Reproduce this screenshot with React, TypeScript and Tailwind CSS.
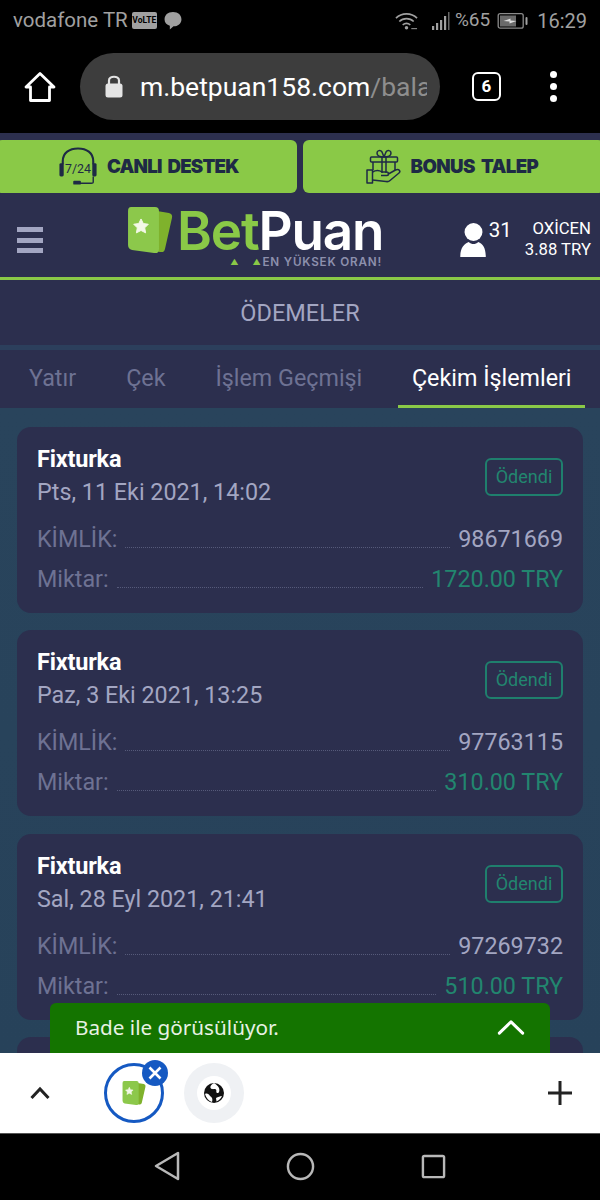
import React from "react";

const records = [
  { date: "Pts, 11 Eki 2021, 14:02", id: "98671669", amount: "1720.00 TRY" },
  { date: "Paz, 3 Eki 2021, 13:25", id: "97763115", amount: "310.00 TRY" },
  { date: "Sal, 28 Eyl 2021, 21:41", id: "97269732", amount: "510.00 TRY" },
];

function LogoCard({ size }: { size: number }) {
  return (
    <svg width={size} height={size * 1.02} viewBox="0 0 46 47" className="shrink-0">
      <path d="M24 3 L42 6 Q46 7 45 11 L38 42 Q37 46 33 45 L22 43 Z" fill="#7fb22c" />
      <path d="M4 0 H28 Q32 0 32 4 L32 42 Q32 47 27 46 L5 43 Q1 42 1 38 V4 Q1 0 4 0 Z" fill="#8cc84b" />
      <path d="M14 12 l2.3 4.6 5 .7 -3.6 3.6 .9 5 -4.6 -2.4 -4.6 2.4 .9 -5 -3.6 -3.6 5 -.7 Z" fill="#f3f8e8" strokeLinejoin="round" stroke="#f3f8e8" strokeWidth="1" />
    </svg>
  );
}

function Headset() {
  return (
    <svg width="40" height="40" viewBox="0 0 42 42" fill="none" stroke="#1e2a45" className="shrink-0">
      <path d="M5 18 V15 C5 6 12 1.500 21 1.500 C30 1.500 37 6 37 15 V18" strokeWidth="2.200" />
      <rect x="1.500" y="17" width="4.500" height="14" rx="1.500" fill="#1e2a45" stroke="none" />
      <rect x="36" y="17" width="4.500" height="14" rx="1.500" fill="#1e2a45" stroke="none" />
      <path d="M37 31 V37 Q37 38 35 38 H22" strokeWidth="1.500" />
      <rect x="16" y="35.500" width="8" height="4" rx="1" fill="#1e2a45" stroke="none" />
      <text x="21" y="27.500" textAnchor="middle" fontSize="13" fontFamily="Roboto, sans-serif" fill="#1e2a45" stroke="none">7/24</text>
    </svg>
  );
}

function Gift() {
  return (
    <svg width="36" height="36" viewBox="0 0 36 36" fill="none" stroke="#1e2a45" strokeWidth="1.500" strokeLinejoin="round" className="shrink-0">
      <path d="M18 8 C14 8 11 6.500 11 4 C11 1.500 14.500 .5 16 3 Z M18 8 C22 8 25 6.500 25 4 C25 1.500 21.500 .5 20 3 Z" />
      <rect x="4.500" y="8" width="27" height="5" rx="1" />
      <path d="M7 13 V21 M29 13 V21" />
      <path d="M16 8 V24 M20 8 V24" />
      <path d="M1 21 H6.500 V34 H1 Z" />
      <path d="M6.500 23 C10 21 13 21 16 23 H21 C23 23 23 26.500 21 26.500 H15 M21.500 25.500 L29.500 21 C33 19.500 35 22 33 24 L24 31.500 Q22.500 33 20 32.500 L6.500 31" />
    </svg>
  );
}

function Card({ date, id, amount }: { date: string; id: string; amount: string }) {
  return (
    <div className="bg-[#2c2f4e] rounded-[14px] h-[186px] pl-[20px] pr-[20px] pt-[17px] shrink-0">
      <div className="flex justify-between items-start">
        <div>
          <div className="text-white font-bold text-[23.500px] leading-[30px] tracking-[-0.2px]">Fixturka</div>
          <div className="text-[#a3a6c2] text-[23.300px] leading-[34px] mt-[1px]">{date}</div>
        </div>
        <div className="mt-[14px] w-[78px] h-[38px] border-2 border-[#1f7f6d] rounded-[6px] text-[#22866f] text-[18px] flex items-center justify-center pb-[1px]">
          Ödendi
        </div>
      </div>
      <div className="flex items-end mt-[10px] h-[40px]">
        <span className="text-[#6e7293] text-[23.300px] leading-[40px]">KİMLİK:</span>
        <span className="flex-1 border-b border-dotted border-[#565a7a] mx-[8px] mb-[11px]" />
        <span className="text-[#a3a6c2] text-[23.300px] leading-[40px]">{id}</span>
      </div>
      <div className="flex items-end h-[40px]">
        <span className="text-[#6e7293] text-[23.300px] leading-[40px]">Miktar:</span>
        <span className="flex-1 border-b border-dotted border-[#565a7a] mx-[8px] mb-[11px]" />
        <span className="text-[#22866f] text-[23.300px] leading-[40px]">{amount}</span>
      </div>
    </div>
  );
}

export default function App() {
  return (
    <div className="relative w-[600px] h-[1200px] overflow-hidden flex flex-col bg-black font-['Roboto',sans-serif]">
      {/* status bar */}
      <div className="h-[42px] shrink-0 flex items-center justify-between pl-[13px] pr-[13px] text-[#a0a0a0] text-[20px] pb-[1px]">
        <div className="flex items-center">
          <span className="text-[20.500px]">vodafone TR</span>
          <span className="ml-[4px] w-[25px] h-[17px] rounded-[2px] bg-[#a0a0a0] text-black text-[8.500px] font-bold flex items-center justify-center leading-none">VoLTE</span>
          <svg width="20" height="19" viewBox="0 0 18 18" className="ml-[6px]">
            <path d="M9 1 C14 1 17 4 17 8 C17 12 13.500 14.500 9.500 14.500 L6 17.500 V14 C3 13 1 11 1 8 C1 4 4 1 9 1 Z" fill="#a0a0a0" />
          </svg>
        </div>
        <div className="flex items-center">
          <svg width="23" height="20" viewBox="0 0 24 20" fill="none" stroke="#a0a0a0" strokeWidth="1.700" className="mr-[13px]">
            <path d="M1 7 C7 1 17 1 23 7 M4.500 10.500 C8.500 6.500 15.500 6.500 19.500 10.500 M8 14 C10.500 12 13.500 12 16 14" />
            <circle cx="12" cy="17" r="1.800" fill="#a0a0a0" stroke="none" />
            <path d="M17 18 h6" strokeWidth="1" />
          </svg>
          <svg width="20" height="20" viewBox="0 0 20 20" className="mr-[4px]">
            <rect x="1" y="15" width="2.200" height="4" fill="#a0a0a0" />
            <rect x="5" y="12" width="2.200" height="7" fill="#a0a0a0" />
            <rect x="9" y="9" width="2.200" height="10" fill="#a0a0a0" />
            <rect x="13" y="5" width="2.200" height="14" fill="#a0a0a0" />
            <rect x="17" y="1" width="1.500" height="18" fill="#666" />
          </svg>
          <span className="text-[19px]">%65</span>
          <svg width="33" height="18" viewBox="0 0 30 18" className="ml-[6px]">
            <rect x=".7" y="1.700" width="25" height="14.500" rx="2" fill="none" stroke="#8a8a8a" strokeWidth="1.300" />
            <rect x="2.500" y="3.500" width="16" height="11" fill="#6a6a6a" />
            <path d="M6 9 L13 6.500 V8.500 L19 9 L12 11.500 V9.500 Z" fill="#ddd" />
            <rect x="28" y="5" width="2" height="8" rx="1" fill="#a0a0a0" />
          </svg>
          <span className="ml-[8px]">16:29</span>
        </div>
      </div>

      {/* browser toolbar */}
      <div className="h-[91px] shrink-0 flex items-center pb-[2px]">
        <svg width="32" height="32" viewBox="0 0 32 32" fill="none" stroke="#fff" strokeWidth="2.800" strokeLinejoin="round" className="ml-[24px] shrink-0">
          <path d="M16 2.500 L30 16 H25.500 V29.500 H6.500 V16 H2 Z" />
        </svg>
        <div className="ml-[24px] w-[360px] h-[67px] rounded-full bg-[#3d3d3d] flex items-center pl-[24px] pr-[13px] overflow-hidden shrink-0">
          <svg width="20" height="25" viewBox="0 0 20 25" className="shrink-0">
            <rect x="1.500" y="9.500" width="17" height="14" rx="2.500" fill="#e4e4e4" />
            <path d="M5 10 V6.500 C5 1.500 15 1.500 15 6.500 V10" fill="none" stroke="#e4e4e4" strokeWidth="2.200" />
          </svg>
          <div className="ml-[16px] text-[26.500px] whitespace-nowrap overflow-hidden text-white">
            m.betpuan158.com<span className="text-[#8e8e8e]">/balance</span>
          </div>
        </div>
        <div className="ml-[32px] w-[29px] h-[29px] border-[2.500px] border-white rounded-[6px] text-white text-[17px] font-bold flex items-center justify-center shrink-0">6</div>
        <div className="ml-[49px] flex flex-col gap-[5px] shrink-0">
          <span className="w-[7px] h-[7px] rounded-full bg-white" />
          <span className="w-[7px] h-[7px] rounded-full bg-white" />
          <span className="w-[7px] h-[7px] rounded-full bg-white" />
        </div>
      </div>

      {/* page */}
      <div className="flex-1 min-h-0 bg-[#2c2f4e] flex flex-col overflow-hidden">
        <div className="mt-[7px] h-[53px] shrink-0 flex gap-[6px] ml-[-4px] mr-[-4px]">
          <div className="flex-1 bg-[#8ac947] rounded-[6px] flex items-center pl-[62px] gap-[9px]">
            <Headset />
            <span className="text-[#1e2a45] text-[18.700px] font-black font-['Inter',sans-serif] tracking-[-0.8px] [word-spacing:3px] pt-[1px]">CANLI DESTEK</span>
          </div>
          <div className="flex-1 bg-[#8ac947] rounded-[6px] flex items-center pl-[63px] gap-[9px]">
            <Gift />
            <span className="text-[#1e2a45] text-[18.700px] font-black font-['Inter',sans-serif] tracking-[-0.6px] [word-spacing:3px] pt-[1px]">BONUS TALEP</span>
          </div>
        </div>

        {/* header */}
        <div className="h-[84px] shrink-0 flex items-center">
          <div className="ml-[17px] w-[26px] flex flex-col gap-[5.500px] mt-[10px]">
            <span className="h-[5px] bg-[#a3a6c2]" />
            <span className="h-[5px] bg-[#a3a6c2]" />
            <span className="h-[5px] bg-[#a3a6c2]" />
          </div>
          <div className="ml-[84px] w-[258px] flex flex-col mt-[5px]">
            <div className="flex items-center h-[48px]">
              <LogoCard size={46} />
              <span className="ml-[4px] text-[53px] font-semibold font-['Inter',sans-serif] leading-[46px] tracking-[-1.200px] text-[#8ac947]">Bet<span className="text-white">Puan</span></span>
            </div>
            <div className="flex items-center justify-end text-[#8d90ad] text-[11.700px] font-semibold font-['Inter',sans-serif] tracking-[0.8px] leading-none mt-[2px] pr-[3px]">
              <span className="text-[#8ac947] text-[8px] mr-[13px]">▲</span>
              <span className="text-[#8ac947] text-[8px] mr-[1px]">▲</span>
              EN YÜKSEK ORAN!
            </div>
          </div>
          <div className="flex-1 self-start mt-[25px] flex items-start justify-end pr-[9px] text-white">
            <div className="flex">
              <svg width="27" height="34" viewBox="0 0 28 36" className="mt-[5px]">
                <circle cx="14" cy="9.500" r="9.500" fill="#fff" />
                <path d="M0 36 C0 26 4 22 9 20 C12 23 16 23 19 20 C24 22 27 26 27 36 Z" fill="#fff" />
              </svg>
              <span className="ml-[2px] text-[20.500px] leading-[24px]">31</span>
            </div>
            <div className="ml-[13px] text-right text-[16.700px] leading-[21px]">
              <div>OXİCEN</div>
              <div>3.88 TRY</div>
            </div>
          </div>
        </div>
        <div className="h-[3px] shrink-0 bg-[#8ac947]" />

        {/* title */}
        <div className="h-[65px] shrink-0 flex items-center justify-center text-[#a3a6c2] text-[23.500px] pt-[3px]">ÖDEMELER</div>
        <div className="h-[5px] shrink-0 bg-[#2c3f5c]" />

        {/* tabs */}
        <div className="h-[58px] shrink-0 flex text-[23.300px] text-[#6e7293]">
          <div className="ml-[29px] mt-[11px]">Yatır</div>
          <div className="ml-[50px] mt-[11px]">Çek</div>
          <div className="ml-[50px] mt-[11px]">İşlem Geçmişi</div>
          <div className="ml-[36px] w-[187px] border-b-[3px] border-[#8ac947] text-white text-center pt-[11px]">Çekim İşlemleri</div>
        </div>

        {/* list */}
        <div className="flex-1 min-h-0 bg-gradient-to-b from-[#29445c] to-[#27425a] px-[17px] pt-[19px] flex flex-col gap-[17.400px] overflow-hidden">
          {records.map((r) => (
            <Card key={r.id} {...r} />
          ))}
          <div className="bg-[#2c2f4e] rounded-[14px] h-[186px] shrink-0" />
        </div>

        {/* tab switcher */}
        <div className="h-[80px] shrink-0 bg-white flex items-center">
          <svg width="20" height="14" viewBox="0 0 20 14" fill="none" stroke="#222" strokeWidth="3" className="ml-[30px] shrink-0">
            <path d="M1.500 12 L10 3 L18.500 12" />
          </svg>
          <div className="relative ml-[54px] w-[60px] h-[60px] rounded-full border-[3px] border-[#1559c2] flex items-center justify-center shrink-0">
            <LogoCard size={24} />
            <span className="absolute top-[-6px] right-[-7px] w-[26px] h-[26px] rounded-full bg-[#1559c2] flex items-center justify-center">
              <svg width="14" height="14" viewBox="0 0 14 14" stroke="#fff" strokeWidth="2.600" fill="none">
                <path d="M1.500 1.500 L12.500 12.500 M12.500 1.500 L1.500 12.500" />
              </svg>
            </span>
          </div>
          <div className="ml-[20px] w-[60px] h-[60px] rounded-full bg-[#eff1f4] flex items-center justify-center shrink-0">
            <span className="w-[34px] h-[34px] rounded-full bg-white flex items-center justify-center">
              <svg width="20" height="20" viewBox="0 0 20 20">
                <circle cx="10" cy="10" r="10" fill="#111" />
                <path d="M10 0 C7 2 6 3 6.500 5 C8 7 10 5.500 12 6.500 C13 8 11.500 9 13 10 C15 10.500 16 8 15 5 C14 3 12 1 10 0 Z M1 11 C3 10 5 11 6 13 C8 14 9 16 8 19 C5 18 2 15 1 11 Z M12 15 C14 13.500 16 13.500 18 13 C17 15.500 15 17.500 12.500 18.500 Z" fill="#fff" />
              </svg>
            </span>
          </div>
          <svg width="24" height="24" viewBox="0 0 24 24" stroke="#222" strokeWidth="3" className="ml-auto mr-[28px] shrink-0">
            <path d="M12 0 V24 M0 12 H24" />
          </svg>
        </div>

        {/* android nav */}
        <div className="h-[67px] shrink-0 bg-black border-t border-[#555] flex items-center pb-[2px]">
          <svg width="26" height="30" viewBox="0 0 26 30" fill="none" stroke="#b8b8b8" strokeWidth="2.500" strokeLinejoin="round" className="ml-[154px] shrink-0">
            <path d="M24 2 V28 L2 15 Z" />
          </svg>
          <svg width="29" height="29" viewBox="0 0 30 30" fill="none" stroke="#b8b8b8" strokeWidth="2.500" className="ml-[106px] shrink-0">
            <circle cx="15" cy="15" r="13" />
          </svg>
          <svg width="25" height="25" viewBox="0 0 26 26" fill="none" stroke="#b8b8b8" strokeWidth="2.500" strokeLinejoin="round" className="ml-[106px] shrink-0">
            <rect x="2" y="2" width="22" height="22" rx="1.500" />
          </svg>
        </div>
      </div>

      {/* chat toast */}
      <div className="absolute left-[50px] top-[1003px] w-[500px] h-[50px] bg-[#147400] rounded-t-[6px] flex items-center justify-between pl-[25px] pr-[25px] text-white pb-[1px]">
        <span className="text-[20.700px] font-['Noto_Sans',sans-serif] text-[#e8f2e4]">Bade ile görüsülüyor.</span>
        <svg width="28" height="17" viewBox="0 0 30 18" fill="none" stroke="#fff" strokeWidth="3.200" strokeLinecap="round" strokeLinejoin="round">
          <path d="M2.500 15 L15 3 L27.500 15" />
        </svg>
      </div>
    </div>
  );
}
